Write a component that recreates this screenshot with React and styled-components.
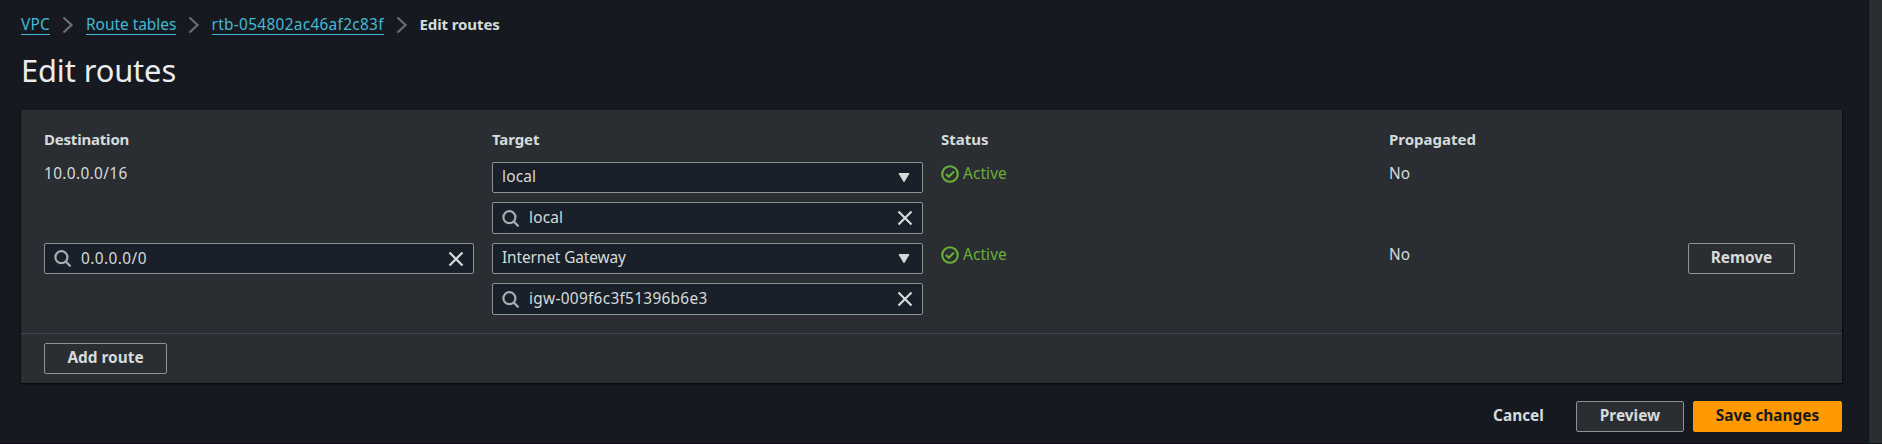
import React from "react";
import styled, { createGlobalStyle, css } from "styled-components";

const colors = {
  page: "#16191f",
  panel: "#2a2e33",
  input: "#1a2029",
  border: "#879596",
  divider: "#414750",
  text: "#d5dbdb",
  heading: "#eaeded",
  link: "#44b9d6",
  chevron: "#687078",
  success: "#6aaf35",
  primary: "#ff9900",
};

const GlobalStyle = createGlobalStyle`
  *, *::before, *::after { box-sizing: border-box; }
  body {
    margin: 0;
    overflow: hidden;
    background: ${colors.page};
    color: ${colors.text};
    font: 400 15.4px/22px "Noto Sans", "Open Sans", sans-serif;
  }
`;

const Shell = styled.div`
  display: flex;
  height: 444px;
  border-bottom: 1px solid #140a1c;
`;

const Main = styled.main`
  flex: 1;
  min-width: 0;
  padding: 13px 27px 0 21px;
`;

const SidePanel = styled.aside`
  width: 13px;
  background: ${colors.panel};
  box-shadow: 0 0 1px 1px #0f1216;
`;

const Label = styled.span`
  display: inline-block;
  white-space: nowrap;
  letter-spacing: ${(p) => p.$track || 0}px;
`;

const Breadcrumbs = styled.nav`
  display: flex;
  align-items: flex-start;
  height: 23px;
`;

const Crumb = styled.a`
  display: block;
  width: ${(p) => p.$width}px;
  height: 22px;
  line-height: 23px;
  white-space: nowrap;
  color: ${colors.link};
  border-bottom: 1px solid ${colors.link};
  letter-spacing: ${(p) => p.$track || 0}px;
`;

const CurrentCrumb = styled.span`
  height: 22px;
  line-height: 22px;
  font-weight: 700;
  font-size: 15px;
  letter-spacing: -0.1px;
`;

const ChevronIcon = styled.svg`
  flex: none;
  width: 12px;
  height: 18px;
  margin: 3px 12px 0 12px;
  fill: none;
  stroke: ${colors.chevron};
  stroke-width: 2.2;
`;

const Title = styled.h1`
  margin: 14px 0 0;
  height: 40px;
  color: ${colors.heading};
  font-size: 30.8px;
  font-weight: 400;
  line-height: 40px;
  letter-spacing: -0.1px;
`;

const Panel = styled.section`
  margin-top: 20px;
  height: 273px;
  background: ${colors.panel};
  box-shadow: 0 1px 1px 0 #08090b, 1px 1px 1px 0 #0c0e12, -1px 1px 1px 0 #0f1216;
`;

const PanelBody = styled.div`
  height: 223px;
  padding: 18px 23px 0;
`;

const PanelFooter = styled.div`
  display: flex;
  height: 50px;
  padding: 9px 23px 0;
  border-top: 1px solid ${colors.divider};
`;

const TableRow = styled.div`
  display: grid;
  grid-template-columns: 430px 431px 430px 281px max-content;
  grid-template-rows: ${(p) => p.$height}px;
  align-items: start;
  column-gap: 18px;
`;

const HeaderCell = styled.div`
  font-weight: 700;
  font-size: 15px;
  line-height: 23px;
  white-space: nowrap;
  letter-spacing: ${(p) => p.$track || 0}px;
`;

const Cell = styled.div`
  line-height: 24px;
`;

const FieldStack = styled.div`
  display: flex;
  flex-direction: column;
  gap: 9px;
`;

const Field = styled.div`
  display: flex;
  align-items: center;
  width: 100%;
  height: ${(p) => p.$height || 31}px;
  padding: 0 9px;
  background: ${colors.input};
  border: 1px solid ${colors.border};
  border-radius: 2px;

  ${Label} {
    flex: 1;
    padding-bottom: ${(p) => (p.$select ? 1 : 0)}px;
  }
`;

const SearchIcon = styled.svg`
  flex: none;
  width: 17px;
  height: 17px;
  margin-right: 10px;
  fill: none;
  stroke: #a3afb0;
  stroke-width: 2.2;
`;

const CloseIcon = styled.svg`
  flex: none;
  width: 16px;
  height: 16px;
  fill: none;
  stroke: ${colors.text};
  stroke-width: 2.2;
`;

const CaretIcon = styled.svg`
  flex: none;
  width: 12px;
  height: 11px;
  margin-right: 3px;
  fill: ${colors.text};
  stroke: ${colors.text};
  stroke-width: 1;
  stroke-linejoin: round;
`;

const StatusLine = styled.div`
  display: flex;
  align-items: center;
  gap: 4px;
  color: ${colors.success};
  line-height: 23px;
`;

const StatusSvg = styled.svg`
  width: 18px;
  height: 18px;
  margin-top: 1px;
  fill: none;
  stroke: currentColor;
  stroke-width: 2.1;
`;

const variants = {
  normal: css`
    background: ${colors.panel};
    border-color: ${colors.border};
  `,
  primary: css`
    background: ${colors.primary};
    border-color: ${colors.primary};
    color: #16191f;
  `,
  link: css`
    background: transparent;
    border-color: transparent;
  `,
};

const Button = styled.button`
  width: ${(p) => p.$width}px;
  height: 31px;
  padding: 0 0 2px;
  border: 1px solid;
  border-radius: 2px;
  color: ${colors.text};
  font: inherit;
  font-weight: 700;
  line-height: 22px;
  white-space: nowrap;
  ${(p) => variants[p.$variant || "normal"]}
`;

const Actions = styled.div`
  display: flex;
  justify-content: flex-end;
  gap: 9px;
  margin-top: 18px;
`;

const Chevron = () => (
  <ChevronIcon viewBox="0 0 12 18"><path d="M1.5 1.5 9.5 9 1.5 16.5" /></ChevronIcon>
);

const Search = () => (
  <SearchIcon viewBox="0 0 17 17"><circle cx="7.4" cy="7.2" r="6" /><path d="m11.6 11.4 5 5" /></SearchIcon>
);

const Close = () => (
  <CloseIcon viewBox="0 0 16 16"><path d="m1.5 1.5 13 13m0-13-13 13" /></CloseIcon>
);

const SelectField = ({ value, track }) => (
  <Field $select>
    <Label $track={track}>{value}</Label>
    <CaretIcon viewBox="0 0 12 11"><path d="M1 1.5h10L6 9.8Z" /></CaretIcon>
  </Field>
);

const SearchField = ({ value, height, track }) => (
  <Field $height={height}>
    <Search />
    <Label $track={track}>{value}</Label>
    <Close />
  </Field>
);

const Status = () => (
  <StatusLine>
    <StatusSvg viewBox="0 0 18 18">
      <circle cx="9" cy="9" r="7.8" />
      <path d="m5 9 2.8 2.7L13 6.5" />
    </StatusSvg>
    <Label $track={0.1}>Active</Label>
  </StatusLine>
);

export default function App() {
  return (
    <>
      <GlobalStyle />
      <Shell>
        <Main>
          <Breadcrumbs>
            <Crumb $width={29} $track={0.2}>VPC</Crumb>
            <Chevron />
            <Crumb $width={89.5}>Route tables</Crumb>
            <Chevron />
            <Crumb $width={172} $track={0.31}>rtb-054802ac46af2c83f</Crumb>
            <Chevron />
            <CurrentCrumb>Edit routes</CurrentCrumb>
          </Breadcrumbs>
          <Title>Edit routes</Title>
          <Panel>
            <PanelBody>
              <TableRow $height={34}>
                <HeaderCell $track={-0.2}>Destination</HeaderCell>
                <HeaderCell $track={-0.1}>Target</HeaderCell>
                <HeaderCell>Status</HeaderCell>
                <HeaderCell>Propagated</HeaderCell>
              </TableRow>
              <TableRow $height={81}>
                <Cell><Label $track={0.35}>10.0.0.0/16</Label></Cell>
                <FieldStack>
                  <SelectField value="local" track={0.2} />
                  <SearchField value="local" height={32} track={0.2} />
                </FieldStack>
                <Status />
                <Cell><Label>No</Label></Cell>
              </TableRow>
              <TableRow $height={72}>
                <SearchField value="0.0.0.0/0" track={0.42} />
                <FieldStack>
                  <SelectField value="Internet Gateway" track={-0.1} />
                  <SearchField value="igw-009f6c3f51396b6e3" height={32} track={0.3} />
                </FieldStack>
                <Status />
                <Cell><Label>No</Label></Cell>
                <Button $width={107}>Remove</Button>
              </TableRow>
            </PanelBody>
            <PanelFooter>
              <Button $width={123}>Add route</Button>
            </PanelFooter>
          </Panel>
          <Actions>
            <Button $variant="link" $width={97}>Cancel</Button>
            <Button $width={108}>Preview</Button>
            <Button $variant="primary" $width={149}>Save changes</Button>
          </Actions>
        </Main>
        <SidePanel />
      </Shell>
    </>
  );
}
